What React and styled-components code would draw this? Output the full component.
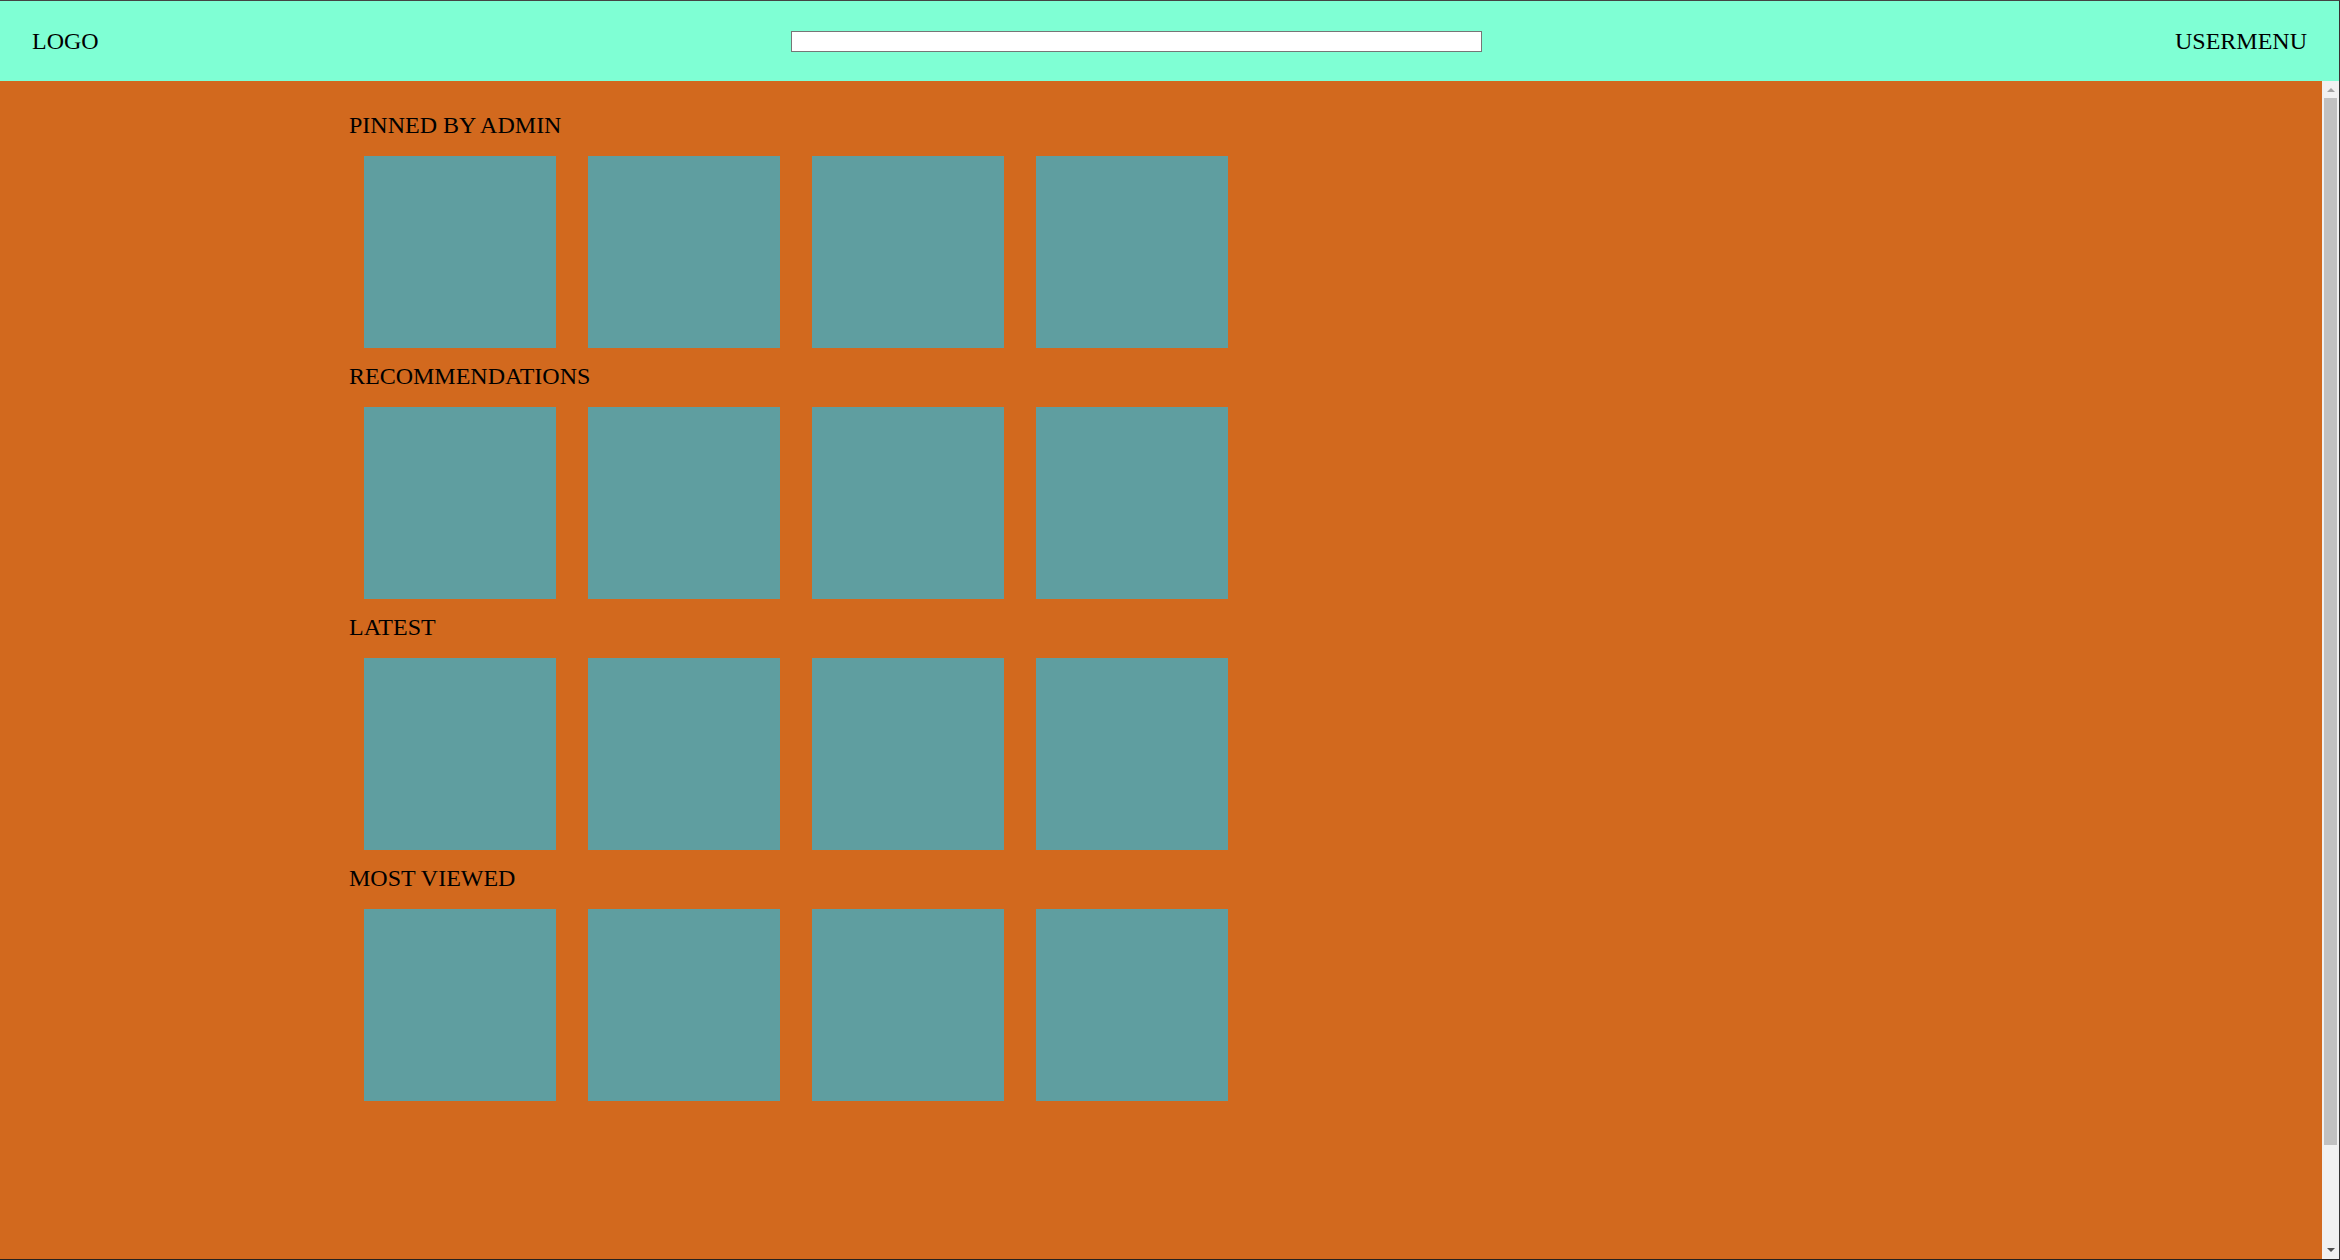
import React from 'react';
import styled, { createGlobalStyle } from 'styled-components';

const GlobalStyle = createGlobalStyle`
  html, body {
    margin: 0;
    padding: 0;
    height: 100%;
    overflow: hidden;
  }
  body {
    font-family: "Liberation Serif", "Times New Roman", serif;
    color: #000;
  }
  #root {
    height: 100%;
  }
`;

const Page = styled.div`
  box-sizing: border-box;
  height: 100vh;
  display: flex;
  flex-direction: column;
  border-top: 1px solid #444;
  border-right: 1px solid #333;
  border-bottom: 1px solid #222;
`;

const Header = styled.header`
  flex: 0 0 80px;
  display: grid;
  grid-template-columns: 759px 691px 1fr;
  align-items: center;
  padding: 0 32px;
  background-color: #7fffd4;
  font-size: 24px;
`;

const Logo = styled.div``;

const Search = styled.input`
  box-sizing: border-box;
  width: 691px;
  height: 21px;
  margin: 0;
  padding: 0 4px;
  border: 1px solid #767676;
  background: #fff;
  outline: none;
`;

const UserMenu = styled.div`
  justify-self: end;
`;

const Main = styled.main`
  flex: 1;
  min-height: 0;
  display: flex;
  overflow: hidden;
  background-color: #d2691e;
`;

const Content = styled.div`
  flex: 1;
  box-sizing: border-box;
  padding: 31px 0 0 349px;
`;

const Section = styled.section`
  margin-bottom: 15px;
`;

const SectionTitle = styled.h2`
  margin: 0 0 17px;
  font-size: 24px;
  font-weight: normal;
  line-height: 27px;
`;

const TileRow = styled.div`
  display: flex;
  gap: 32px;
  padding-left: 15px;
`;

const Tile = styled.div`
  width: 192px;
  height: 192px;
  background-color: #5f9ea0;
`;

/* page scrollbar, drawn since the headless browser hides native ones */
const ScrollTrack = styled.div`
  flex: 0 0 17px;
  display: flex;
  flex-direction: column;
  background: #f1f1f1;
`;

const ScrollButton = styled.div`
  flex: 0 0 17px;
  display: flex;
  align-items: center;
  justify-content: center;
`;

const Arrow = styled.span`
  width: 0;
  height: 0;
  border-left: 4px solid transparent;
  border-right: 4px solid transparent;
  ${(p) =>
    p.$up
      ? `border-bottom: 4px solid #a3a3a3; margin-top: 1px;`
      : `border-top: 4px solid #505050; margin-bottom: 1px;`}
`;

const ScrollSpace = styled.div`
  flex: 1;
  padding: 0 2px;
`;

const ScrollThumb = styled.div`
  height: 1047px;
  background: #c1c1c1;
`;

const sections = ['PINNED BY ADMIN', 'RECOMMENDATIONS', 'LATEST', 'MOST VIEWED'];

export default function App() {
  return (
    <>
      <GlobalStyle />
      <Page>
        <Header>
          <Logo>LOGO</Logo>
          <Search type="text" />
          <UserMenu>USERMENU</UserMenu>
        </Header>
        <Main>
          <Content>
            {sections.map((title) => (
              <Section key={title}>
                <SectionTitle>{title}</SectionTitle>
                <TileRow>
                  {[0, 1, 2, 3].map((i) => (
                    <Tile key={i} />
                  ))}
                </TileRow>
              </Section>
            ))}
          </Content>
          <ScrollTrack>
            <ScrollButton>
              <Arrow $up />
            </ScrollButton>
            <ScrollSpace>
              <ScrollThumb />
            </ScrollSpace>
            <ScrollButton>
              <Arrow />
            </ScrollButton>
          </ScrollTrack>
        </Main>
      </Page>
    </>
  );
}
